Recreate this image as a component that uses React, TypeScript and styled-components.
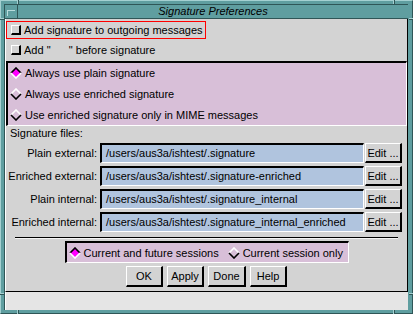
import React from "react";
import styled, { createGlobalStyle } from "styled-components";

const GlobalStyle = createGlobalStyle`
  body {
    margin: 0;
    font-family: "Liberation Sans", Arial, sans-serif;
    font-size: 11px;
    color: #000;
  }
`;

const Frame = styled.div`
  position: relative;
  width: 413px;
  height: 314px;
  box-sizing: border-box;
  background: #5f9ea0;
  border-style: solid;
  border-width: 1px;
  border-color: #a4d0d1 #2f5657 #2f5657 #a4d0d1;
  padding: 3px 4px 3px 3px;
  display: flex;
  flex-direction: column;
`;

const Notch = styled.span<{ $v?: boolean }>`
  position: absolute;
  background: #2f5657;
  border-color: #a4d0d1;
  border-style: solid;
  border-width: ${(p) => (p.$v ? "0 0 0 1px" : "1px 0 0 0")};
  width: ${(p) => (p.$v ? "1px" : "4px")};
  height: ${(p) => (p.$v ? "4px" : "1px")};
`;

const Client = styled.div`
  flex: 1;
  display: flex;
  flex-direction: column;
  border-top: 1px solid #2f5657;
  border-left: 1px solid #2f5657;
`;

const TitleBar = styled.div`
  height: 14px;
  box-sizing: border-box;
  display: flex;
  border-bottom: 1px solid #2f5657;
  background: #5f9ea0;
`;

const MenuButton = styled.div`
  width: 12px;
  border-right: 1px solid #2f5657;
  position: relative;
  &::after {
    content: "";
    position: absolute;
    left: 2px;
    top: 5px;
    width: 7px;
    height: 5px;
    border-top: 1px solid #b8dcdc;
    border-left: 1px solid #b8dcdc;
  }
`;

const Title = styled.div`
  flex: 1;
  text-align: center;
  font-style: italic;
  line-height: 13px;
`;

const Panel = styled.div`
  flex: 1;
  display: flex;
  flex-direction: column;
  padding-top: 2px;
  background: #d3d3d3;
  border-left: 1px solid #fff;
  border-right: 1px solid #000;
  border-bottom: 1px solid #000;
`;

const Footer = styled.div`
  height: 18px;
  background: #e5e5e5;
  border-left: 1px solid #fff;
`;

const ToggleRow = styled.div<{ $focus?: boolean }>`
  height: 18px;
  width: 200px;
  box-sizing: border-box;
  display: flex;
  align-items: center;
  padding-left: 4px;
  white-space: pre;
  border: 1px solid ${(p) => (p.$focus ? "#ff0000" : "transparent")};
  & + & {
    margin-top: 2px;
  }
`;

const CheckBox = styled.span`
  flex-shrink: 0;
  width: 10px;
  height: 10px;
  box-sizing: border-box;
  margin-right: 3px;
  background: #d3d3d3;
  border-style: solid;
  border-width: 1px 2px 2px 1px;
  border-color: #fff #000 #000 #fff;
`;

const RadioBox = styled.div`
  margin-top: 2px;
  height: 65px;
  box-sizing: border-box;
  background: #d8bfd8;
  border-style: solid;
  border-width: 2px 1px 1px 2px;
  border-color: #000 #fff #fff #000;
  display: flex;
  flex-direction: column;
`;

const RadioRow = styled.div`
  height: 21px;
  display: flex;
  align-items: center;
  padding-left: 2px;
  gap: 3px;
  white-space: nowrap;
`;

const SectionLabel = styled.div`
  height: 14px;
  line-height: 14px;
  padding-left: 4px;
  margin-bottom: 3px;
`;

const FileList = styled.div`
  display: flex;
  flex-direction: column;
  gap: 3px;
`;

const FileRow = styled.div`
  height: 20px;
  display: flex;
  align-items: stretch;
`;

const FileLabel = styled.div`
  width: 94px;
  padding-right: 3px;
  box-sizing: border-box;
  text-align: right;
  line-height: 20px;
  white-space: nowrap;
`;

const Field = styled.div`
  width: 264px;
  box-sizing: border-box;
  background: #b0c4de;
  border-style: solid;
  border-width: 2px 1px 1px 2px;
  border-color: #000 #fff #fff #000;
  padding-left: 4px;
  line-height: 16px;
  white-space: nowrap;
  overflow: hidden;
`;

const Button = styled.button<{ $w?: number }>`
  width: ${(p) => p.$w ?? 37}px;
  box-sizing: border-box;
  padding: 0;
  margin: 0;
  font: inherit;
  color: #000;
  background: #d3d3d3;
  border-style: solid;
  border-width: 1px 2px 2px 1px;
  border-color: #fff #000 #000 #fff;
  border-radius: 0;
  white-space: nowrap;
`;

const EditButton = styled(Button)`
  margin-left: 1px;
`;

const Separator = styled.div`
  margin: 5px 9px 0;
  height: 1px;
  background: #000;
  border-bottom: 1px solid #f4f4f4;
`;

const ScopeBox = styled.div`
  align-self: center;
  margin-top: 2px;
  width: 284px;
  height: 22px;
  box-sizing: border-box;
  background: #d8bfd8;
  border-style: solid;
  border-width: 2px 1px 1px 2px;
  border-color: #000 #fff #fff #000;
  display: flex;
  align-items: center;
  padding-left: 2px;
`;

const ScopeOption = styled.div`
  flex-shrink: 0;
  display: flex;
  align-items: center;
  gap: 3px;
  margin-right: 9px;
  white-space: nowrap;
`;

const ButtonRow = styled.div`
  margin-top: 3px;
  height: 21px;
  display: flex;
  justify-content: center;
  gap: 4px;
`;

const DiamondIcon = styled.svg`
  flex-shrink: 0;
  display: block;
`;

const Diamond = ({ on }: { on?: boolean }) => (
  <DiamondIcon width="12" height="12" viewBox="0 0 12 12">
    <polygon points="6,1 11,6 6,11 1,6" fill={on ? "#ff00ff" : "#d8bfd8"} />
    <polyline
      points="1,6 6,1 11,6"
      fill="none"
      stroke={on ? "#000" : "#fff"}
      strokeWidth="1.6"
    />
    <polyline
      points="1,6 6,11 11,6"
      fill="none"
      stroke={on ? "#fff" : "#000"}
      strokeWidth="1.6"
    />
  </DiamondIcon>
);

const files = [
  ["Plain external:", "/users/aus3a/ishtest/.signature"],
  ["Enriched external:", "/users/aus3a/ishtest/.signature-enriched"],
  ["Plain internal:", "/users/aus3a/ishtest/.signature_internal"],
  ["Enriched internal:", "/users/aus3a/ishtest/.signature_internal_enriched"],
];

const App = () => {
  return (
    <Frame>
      <GlobalStyle />
      <Notch $v style={{ left: 16, top: -1 }} />
      <Notch $v style={{ left: 392, top: -1 }} />
      <Notch $v style={{ left: 16, bottom: -1 }} />
      <Notch $v style={{ left: 392, bottom: -1 }} />
      <Notch style={{ left: -1, top: 17 }} />
      <Notch style={{ right: -1, top: 17 }} />
      <Notch style={{ left: -1, bottom: 18 }} />
      <Notch style={{ right: -1, bottom: 18 }} />
      <Client>
        <TitleBar>
          <MenuButton />
          <Title>Signature Preferences</Title>
        </TitleBar>
        <Panel>
          <ToggleRow $focus>
            <CheckBox />
            Add signature to outgoing messages
          </ToggleRow>
          <ToggleRow>
            <CheckBox />
            {'Add "      " before signature'}
          </ToggleRow>
          <RadioBox>
            <RadioRow>
              <Diamond on />
              Always use plain signature
            </RadioRow>
            <RadioRow>
              <Diamond />
              Always use enriched signature
            </RadioRow>
            <RadioRow>
              <Diamond />
              Use enriched signature only in MIME messages
            </RadioRow>
          </RadioBox>
          <SectionLabel>Signature files:</SectionLabel>
          <FileList>
            {files.map(([label, path]) => (
              <FileRow key={label}>
                <FileLabel>{label}</FileLabel>
                <Field>{path}</Field>
                <EditButton>Edit ...</EditButton>
              </FileRow>
            ))}
          </FileList>
          <Separator />
          <ScopeBox>
            <ScopeOption>
              <Diamond on />
              Current and future sessions
            </ScopeOption>
            <ScopeOption>
              <Diamond />
              Current session only
            </ScopeOption>
          </ScopeBox>
          <ButtonRow>
            <Button>OK</Button>
            <Button>Apply</Button>
            <Button $w={38}>Done</Button>
            <Button>Help</Button>
          </ButtonRow>
        </Panel>
        <Footer />
      </Client>
    </Frame>
  );
};

export default App;
